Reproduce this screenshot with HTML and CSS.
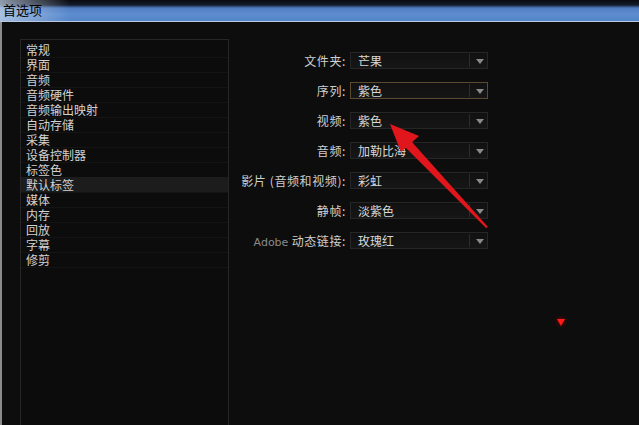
FILE: index.html
```html
<!DOCTYPE html>
<html lang="zh">
<head>
    <meta charset="UTF-8">
    <title>首选项</title>
    <link rel="stylesheet" href="styles.css">
</head>
<body>

    <div class="titlebar">首选项</div>

    <div class="window">
        <ul class="sidebar">
            <li>常规</li>
            <li>界面</li>
            <li>音频</li>
            <li>音频硬件</li>
            <li>音频输出映射</li>
            <li>自动存储</li>
            <li>采集</li>
            <li>设备控制器</li>
            <li>标签色</li>
            <li class="active">默认标签</li>
            <li>媒体</li>
            <li>内存</li>
            <li>回放</li>
            <li>字幕</li>
            <li>修剪</li>
        </ul>

        <div class="panel">
            <div class="form">
                <label>文件夹:</label>
                <div class="select"><span>芒果</span><i></i></div>

                <label>序列:</label>
                <div class="select focused"><span>紫色</span><i></i></div>

                <label>视频:</label>
                <div class="select"><span>紫色</span><i></i></div>

                <label>音频:</label>
                <div class="select"><span>加勒比海</span><i></i></div>

                <label>影片 (音频和视频):</label>
                <div class="select"><span>彩虹</span><i></i></div>

                <label>静帧:</label>
                <div class="select"><span>淡紫色</span><i></i></div>

                <label><em>Adobe</em> 动态链接:</label>
                <div class="select"><span>玫瑰红</span><i></i></div>
            </div>
        </div>

        <!-- red marker arrow pointing at the video label dropdown -->
        <svg class="marker" width="639" height="425" viewBox="0 0 639 425">
            <defs>
                <filter id="soft"><feGaussianBlur stdDeviation="0.6"/></filter>
            </defs>
            <g filter="url(#soft)" fill="#e0191b">
                <polygon points="488,227 486,228 405,147 411,141"/>
                <polygon points="390,124 419,136 401,152"/>
            </g>
        </svg>
        <div class="tri"></div>
    </div>

</body>
</html>
```

FILE: styles.css
```css
body {
    margin: 0;
    width: 639px;
    height: 425px;
    overflow: hidden;
    background: #0d0d0d;
    font-family: "Noto Sans CJK SC", "DejaVu Sans", sans-serif;
    font-size: 12px;
    color: #d2d2d2;
}
.titlebar {
    height: 21px;
    border-bottom: 1px solid #b9c8e0;
    padding-left: 3px;
    line-height: 19px;
    font-size: 13px;
    color: #000;
    background:
        linear-gradient(90deg, rgba(200, 215, 235, 0.7) 0, rgba(120, 160, 215, 0) 70px),
        linear-gradient(180deg, #07090d 0, #151e2e 5px, #4f7cc0 8px, #5d8dd0 14px, #5486c8 20px);
}
.window {
    position: relative;
    display: flex;
    height: 403px;
    border-left: 2px solid #8c8c8c;
    box-sizing: border-box;
}
.sidebar {
    list-style: none;
    margin: 17px 0 0 18px;
    padding: 2px 0 0;
    width: 207px;
    border: 1px solid #262626;
    border-bottom: none;
    background: #0c0c0c;
}
.sidebar li {
    height: 15px;
    line-height: 15px;
    padding-left: 5px;
    border-bottom: 1px solid #141414;
    margin-bottom: -1px;
}
.sidebar li.active {
    background: #1c1c1c;
}
.panel {
    flex: 1;
}
.form {
    display: grid;
    grid-template-columns: 117px 138px;
    column-gap: 4px;
    row-gap: 13px;
    margin: 30px 0 0 0;
    align-items: center;
}
.form label {
    text-align: right;
    letter-spacing: 0.6px;
    color: #cfcfcf;
}
.form label em {
    font-style: normal;
    font-family: "DejaVu Sans", sans-serif;
    font-size: 11px;
    letter-spacing: 0;
    color: #8a8a8a;
}
.select {
    position: relative;
    height: 17px;
    line-height: 16px;
    border: 1px solid #262626;
    background: linear-gradient(#111, #161616);
    box-sizing: border-box;
    padding-left: 7px;
    color: #d8d8d8;
}
.select.focused {
    border-color: #5a4a30;
}
.select i {
    position: absolute;
    right: 0;
    top: 1px;
    bottom: 1px;
    width: 17px;
    border-left: 1px solid #2c2c2c;
}
.select i::after {
    content: "";
    position: absolute;
    left: 6px;
    top: 5px;
    border-left: 4px solid transparent;
    border-right: 4px solid transparent;
    border-top: 5px solid #8a8a8a;
}
.marker {
    position: absolute;
    left: -2px;
    top: -22px;
    pointer-events: none;
}
.tri {
    position: absolute;
    left: 555px;
    top: 297px;
    border-left: 4px solid transparent;
    border-right: 4px solid transparent;
    border-top: 7px solid #ff1a1a;
    filter: drop-shadow(0 0 2px #a00);
}
```
